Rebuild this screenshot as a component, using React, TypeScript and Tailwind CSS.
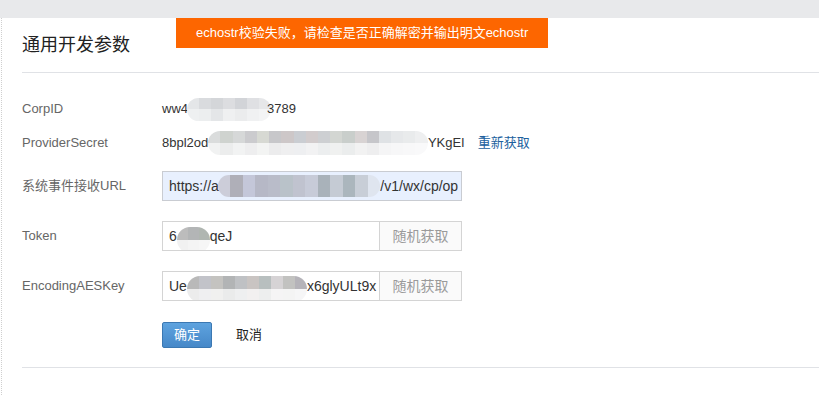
// 通用开发参数 · settings form with masked secrets + error toast

type MosaicProps = {
  /** top-row cell colours, left → right */
  top: string[];
  /** bottom-row cell colours (lighter, blurred edge) */
  bottom: string[];
  cell: number;
  height: number;
  className?: string;
};

function Mosaic({ top, bottom, cell, height, className }: MosaicProps) {
  return (
    <span
      className={
        "inline-flex flex-col overflow-hidden rounded-full align-middle shrink-0 " +
        (className ?? "")
      }
      style={{ width: top.length * cell, height }}
    >
      <span className="flex flex-1">
        {top.map((c, i) => (
          <span key={i} className="h-full" style={{ width: cell, backgroundColor: c }} />
        ))}
      </span>
      <span className="flex flex-1">
        {bottom.map((c, i) => (
          <span key={i} className="h-full" style={{ width: cell, backgroundColor: c }} />
        ))}
      </span>
    </span>
  );
}

const CORP_TOP = ["#e4e6e8", "#d9dbde", "#d4d6d9", "#dcdde0", "#d2d4d8", "#dfe0e3", "#e6e7e9"];
const CORP_BOTTOM = ["#eef0f1", "#eceeef", "#e4e6e8", "#eff0f1", "#ebeced", "#f0f1f2", "#f3f4f5"];

const SECRET_TOP = [
  "#dadcdc", "#cfd3cf", "#d6d8d8", "#cbcbce", "#d7d9d3", "#c7c7ca", "#cdc7c8", "#cacdd2",
  "#d2cccd", "#cdcfd2", "#d3d6d2", "#c9cecb", "#d8d3d3", "#c6c6ca", "#dfe2e5", "#e6e8ea",
  "#e9ebec", "#eeeff0",
];
const SECRET_BOTTOM = [
  "#f1f2f2", "#eceded", "#f2f3f3", "#eeeeef", "#f3f4f3", "#ececed", "#efeff0", "#eeeff1",
  "#f2f2f3", "#eceeef", "#f0f1f0", "#ebeded", "#f2f2f2", "#eeeeef", "#f5f5f6", "#f7f7f8",
  "#f8f8f9", "#f9f9fa",
];

const URL_TOP = [
  "#c9cad6", "#a9a8b1", "#c1c3d6", "#b1b3c0", "#b5b7c4", "#b4bec4", "#bcbfca", "#c4c8d4",
  "#a3acb3", "#c2c8d0", "#a5b0b7", "#c5cbd3", "#dfe4ee",
];

const TOKEN_TOP = ["#bcbcbc", "#b3b5b6", "#b0b6b1"];
const TOKEN_BOTTOM = ["#f1f1f1", "#f4f4f4", "#f6f6f6"];

const AES_TOP = [
  "#b9b9b9", "#c2c3c9", "#c4c3c0", "#b2b4b5", "#bfc1c4", "#c9c4c2", "#b8bfbf", "#d6d3d5",
  "#c2c2c0", "#b5b3b9",
];
const AES_BOTTOM = [
  "#ececec", "#efeff1", "#f0f0ef", "#eaebeb", "#eeeff0", "#f2f0f0", "#edeeee", "#f5f4f5",
  "#f4f4f4", "#f6f6f7",
];

function Label({ children }: { children: React.ReactNode }) {
  return <div className="w-[140px] shrink-0 text-[#666] text-[13px]">{children}</div>;
}

function RandomButton() {
  return (
    <div className="w-[82px] h-full shrink-0 border-l border-[#d4d4d4] bg-[#fafafa] flex items-center justify-center text-[14px] text-[#9a9a9a]">
      随机获取
    </div>
  );
}

export default function App() {
  return (
    <div
      className="relative w-[819px] h-[395px] overflow-hidden bg-white text-[#333]"
      style={{ fontFamily: '"Liberation Sans", Arial, "Noto Sans CJK SC", sans-serif' }}
    >
      <div className="h-[18px] bg-[#e8e9eb]" />

      {/* error toast */}
      <div className="absolute left-[176px] top-[18px] w-[372px] h-[30px] bg-[#fd6600] text-white text-[13px] flex items-center pl-[20px]">
        echostr校验失败，请检查是否正确解密并输出明文echostr
      </div>

      <div className="ml-px h-[377px] border-l border-dotted border-[#cfcfcf] pl-[20px]">
        <div className="h-[55px] flex items-center border-b border-[#e0e2e6] text-[18px] text-[#222]">
          通用开发参数
        </div>

        <div className="pt-[19px]">
          <div className="h-[34px] flex items-center">
            <Label>CorpID</Label>
            <div className="flex items-center text-[13px] whitespace-nowrap">
              <span>ww4</span>
              <Mosaic top={CORP_TOP} bottom={CORP_BOTTOM} cell={12} height={23} className="-ml-px" />
              <span className="-ml-[4px]">3789</span>
            </div>
          </div>

          <div className="h-[34px] flex items-center">
            <Label>ProviderSecret</Label>
            <div className="flex items-center text-[13px] whitespace-nowrap">
              <span>8bpl2od</span>
              <Mosaic top={SECRET_TOP} bottom={SECRET_BOTTOM} cell={12.2} height={24} />
              <span>YKgEI</span>
              <a className="ml-[13px] text-[#20619e]">重新获取</a>
            </div>
          </div>

          <div className="mt-[11px] h-[30px] flex items-center">
            <Label>系统事件接收URL</Label>
            <div className="w-[300px] h-[30px] border border-[#c9ccd2] bg-[#e8f0fe] flex items-center pl-[6px] overflow-hidden whitespace-nowrap text-[14px]">
              <span>https://a</span>
              <Mosaic top={URL_TOP} bottom={URL_TOP} cell={12.5} height={22} className="-ml-px opacity-90" />
              <span>/v1/wx/cp/op</span>
            </div>
          </div>

          <div className="mt-[20px] h-[30px] flex items-center">
            <Label>Token</Label>
            <div className="w-[300px] h-[30px] border border-[#d4d4d4] flex items-center overflow-hidden">
              <div className="flex-1 flex items-center pl-[6px] whitespace-nowrap text-[14px]">
                <span>6</span>
                <Mosaic top={TOKEN_TOP} bottom={TOKEN_BOTTOM} cell={11} height={26} className="mt-[8px]" />
                <span>qeJ</span>
              </div>
              <RandomButton />
            </div>
          </div>

          <div className="mt-[20px] h-[30px] flex items-center">
            <Label>EncodingAESKey</Label>
            <div className="w-[300px] h-[30px] border border-[#d4d4d4] flex items-center overflow-hidden">
              <div className="flex-1 min-w-0 flex items-center pl-[6px] whitespace-nowrap overflow-hidden text-[14px]">
                <span>Ue</span>
                <Mosaic top={AES_TOP} bottom={AES_BOTTOM} cell={12} height={26} className="mt-[6px]" />
                <span>x6glyULt9x</span>
              </div>
              <RandomButton />
            </div>
          </div>

          <div className="mt-[21px] h-[26px] flex items-center">
            <div className="w-[140px] shrink-0" />
            <button className="w-[50px] h-[26px] rounded-[2px] border border-[#3b78b2] bg-gradient-to-b from-[#5ea3df] to-[#4688c8] text-white text-[13px]">
              确定
            </button>
            <span className="ml-[24px] text-[13px] text-[#222]">取消</span>
          </div>

          <div className="mt-[19px] border-b border-[#e0e2e6]" />
        </div>
      </div>
    </div>
  );
}
